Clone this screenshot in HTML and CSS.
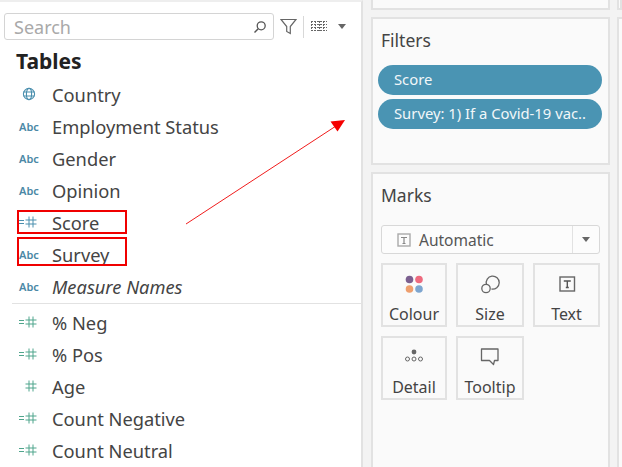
FILE: index.html
```html
<!DOCTYPE html>
<html lang="en">
<head>
  <meta charset="UTF-8" />
  <meta name="viewport" content="width=device-width, initial-scale=1.0" />
  <title>Data pane</title>
  <link rel="stylesheet" href="styles.css">
</head>
<body>
  <svg width="0" height="0" class="defs">
    <symbol id="hash" viewBox="0 0 12 12">
      <path d="M4 0.5V11.5M8 0.5V11.5M0.5 4H11.5M0.5 8H11.5" fill="none" stroke="currentColor" stroke-width="1"/>
    </symbol>
    <symbol id="bin" viewBox="0 0 5 12">
      <path d="M0 4.500H5M0 7.500H5" fill="none" stroke="currentColor" stroke-width="1"/>
    </symbol>
  </svg>

  <div class="app">
    <div class="data-pane">
      <div class="toolbar">
        <div class="search">
          <span class="search-text">Search</span>
          <svg class="search-icon" width="14" height="14" viewBox="0 0 14 14"><circle cx="8.2" cy="5.8" r="4" fill="none" stroke="#555" stroke-width="1.3"/><path d="M5.2 8.8L1.5 12.5" stroke="#555" stroke-width="1.5"/></svg>
        </div>
        <svg class="filter-icon" width="17" height="17" viewBox="0 0 17 17"><path d="M1 1.5H16L10.3 8.5V15.5L6.7 13.5V8.5Z" fill="none" stroke="#666" stroke-width="1.2"/></svg>
        <span class="tool-sep"></span>
        <svg class="grid-icon" width="16" height="12" viewBox="0 0 16 12"><path d="M0 .5H16M0 3.5H16M0 6.5H16M0 9.5H16M.5 0V10M4.5 0V10M8.5 0V10M12.5 0V10" stroke="#666" stroke-width="1" stroke-dasharray="2 1" fill="none"/></svg>
        <span class="caret"></span>
      </div>

      <h2 class="tables-title">Tables</h2>

      <ul class="field-list">
        <li class="field">
          <span class="field-icon">
            <svg class="globe" width="14" height="14" viewBox="0 0 14 14"><g fill="none" stroke="currentColor" stroke-width="1.1"><circle cx="7" cy="7" r="5.6"/><ellipse cx="7" cy="7" rx="2.6" ry="5.6"/><path d="M1.4 5H12.6M1.4 9H12.6"/></g></svg>
          </span>Country
        </li>
        <li class="field"><span class="field-icon abc">Abc</span>Employment Status</li>
        <li class="field"><span class="field-icon abc">Abc</span>Gender</li>
        <li class="field"><span class="field-icon abc">Abc</span>Opinion</li>
        <li class="field">
          <span class="field-icon blue"><svg class="bin" width="5" height="12"><use href="#bin"/></svg><svg width="12" height="12"><use href="#hash"/></svg></span>Score
        </li>
        <li class="field"><span class="field-icon abc">Abc</span>Survey</li>
        <li class="field italic"><span class="field-icon abc">Abc</span>Measure Names</li>
      </ul>

      <ul class="field-list measures">
        <li class="field">
          <span class="field-icon green"><svg class="bin" width="5" height="12"><use href="#bin"/></svg><svg width="12" height="12"><use href="#hash"/></svg></span>% Neg
        </li>
        <li class="field">
          <span class="field-icon green"><svg class="bin" width="5" height="12"><use href="#bin"/></svg><svg width="12" height="12"><use href="#hash"/></svg></span>% Pos
        </li>
        <li class="field">
          <span class="field-icon green"><svg class="bin blank" width="5" height="12"></svg><svg width="12" height="12"><use href="#hash"/></svg></span>Age
        </li>
        <li class="field">
          <span class="field-icon green"><svg class="bin" width="5" height="12"><use href="#bin"/></svg><svg width="12" height="12"><use href="#hash"/></svg></span>Count Negative
        </li>
        <li class="field">
          <span class="field-icon green"><svg class="bin" width="5" height="12"><use href="#bin"/></svg><svg width="12" height="12"><use href="#hash"/></svg></span>Count Neutral
        </li>
      </ul>
    </div>

    <div class="shelves">
      <div class="card card-top"></div>

      <div class="card card-filters">
        <h3 class="card-title">Filters</h3>
        <div class="pill">Score</div>
        <div class="pill">Survey: 1) If a Covid-19 vac..</div>
      </div>

      <div class="card card-marks">
        <h3 class="card-title">Marks</h3>
        <div class="mark-select">
          <span class="mark-value">
            <svg width="14" height="14" viewBox="0 0 14 14"><rect x="1" y="1" width="12" height="12" fill="none" stroke="#aaa" stroke-width="1.4"/><path d="M4 4.5H10M7 4.5V10.5M5.5 10.5H8.5" fill="none" stroke="#888" stroke-width="1.2"/></svg>
            Automatic
          </span>
          <span class="mark-arrow"><span class="caret"></span></span>
        </div>
        <div class="mark-grid">
          <div class="mark-btn">
            <svg width="20" height="20" viewBox="0 0 20 20"><circle cx="5.5" cy="5.5" r="3.8" fill="#7b5f8f"/><circle cx="15" cy="5.5" r="3.8" fill="#ee6a7e"/><circle cx="5.5" cy="15" r="3.8" fill="#ee9f6e"/><circle cx="15" cy="15" r="3.8" fill="#7da5cf"/></svg>
            <span>Colour</span>
          </div>
          <div class="mark-btn">
            <svg width="20" height="20" viewBox="0 0 20 20"><g fill="none" stroke="#666" stroke-width="1.3"><path d="M6.5 10.5A6.5 6.5 0 1 1 11.5 15"/><circle cx="6" cy="14.5" r="4.2"/></g></svg>
            <span>Size</span>
          </div>
          <div class="mark-btn">
            <svg width="20" height="20" viewBox="0 0 20 20"><rect x="3" y="3" width="14.5" height="14" fill="none" stroke="#666" stroke-width="1.4"/><path d="M6.8 7H13.8M10.3 7V13.5M8.8 13.5H11.8" fill="none" stroke="#555" stroke-width="1.4"/></svg>
            <span>Text</span>
          </div>
          <div class="mark-btn">
            <svg width="20" height="20" viewBox="0 0 20 20"><circle cx="10" cy="5" r="2.4" fill="#666"/><g fill="none" stroke="#666" stroke-width="1"><circle cx="3.5" cy="12" r="2"/><circle cx="10" cy="12" r="2"/><circle cx="16.5" cy="12" r="2"/></g></svg>
            <span>Detail</span>
          </div>
          <div class="mark-btn">
            <svg width="20" height="20" viewBox="0 0 20 20"><path d="M1.5 2H18V13.5H14.5L13.5 17.5L9.5 13.5H1.5Z" fill="none" stroke="#666" stroke-width="1.3" stroke-linejoin="round"/></svg>
            <span>Tooltip</span>
          </div>
        </div>
      </div>
    </div>

    <div class="far-col">
      <div class="card card-top"></div>
      <div class="card card-far"></div>
    </div>
  </div>

  <!-- annotations drawn over the screenshot -->
  <div class="red-box box-score"></div>
  <div class="red-box box-survey"></div>
  <svg class="arrow" width="622" height="467" viewBox="0 0 622 467">
    <path d="M186 224L336 126" stroke="#f01c1c" stroke-width="1" fill="none"/>
    <path d="M345 120L330.500 121.500L337.500 131.500Z" fill="#f50000"/>
  </svg>
</body>
</html>
```

FILE: styles.css
```css
* {
  box-sizing: border-box;
}
html, body {
  height: 100%;
}
body {
  margin: 0;
  position: relative;
  overflow: hidden;
  background: #f3f3f3;
  color: #333;
  font-family: "Noto Sans", Arial, sans-serif;
}
.defs {
  position: absolute;
}
.app {
  display: flex;
  height: 467px;
}

/* data pane */
.data-pane {
  width: 363px;
  flex: none;
  background: #fff;
  border-top: 2px solid #eee;
  border-right: 2px solid #e2e2e2;
}
.toolbar {
  display: flex;
  align-items: center;
  height: 27px;
  margin: 11px 0 0 4px;
}
.search {
  display: flex;
  align-items: center;
  justify-content: space-between;
  width: 270px;
  height: 27px;
  padding: 0 6px 0 9px;
  border: 1px solid #d4d4d4;
  border-radius: 3px;
}
.search-text {
  font-size: 18px;
  color: #a9a9a9;
}
.filter-icon {
  margin-left: 6px;
}
.tool-sep {
  width: 1px;
  height: 22px;
  margin: 0 7px 0 6px;
  background: #d8d8d8;
}
.caret {
  display: inline-block;
  width: 0;
  height: 0;
  border-left: 4px solid transparent;
  border-right: 4px solid transparent;
  border-top: 5px solid #666;
}
.toolbar .caret {
  margin-left: 11px;
}
.tables-title {
  margin: 6px 0 2px 16px;
  height: 30px;
  line-height: 30px;
  font-size: 21px;
  font-weight: 700;
  color: #222;
}
.field-list {
  list-style: none;
  margin: 0;
  padding: 0;
}
.measures {
  margin: 1px 0 0 12px;
  padding-top: 2px;
  border-top: 1px solid #e2e2e2;
}
.measures .field {
  margin-left: -12px;
}
.field {
  display: flex;
  align-items: center;
  height: 32px;
  font-size: 18.300px;
  color: #444;
}
.italic {
  font-style: italic;
}
.field-icon {
  display: flex;
  align-items: center;
  width: 52px;
  padding-left: 19px;
  flex: none;
}
.abc {
  font-size: 11px;
  font-weight: 600;
  font-style: normal;
  color: #4b88a6;
}
.globe {
  margin-left: 3px;
}
.blue, .globe {
  color: #4b8fae;
}
.green {
  color: #4fa58c;
}
.bin {
  margin-right: 1px;
}

/* middle column */
.shelves {
  width: 254px;
  flex: none;
  padding: 0 7px 0 8px;
}
.card {
  border: 2px solid #e2e2e2;
  background: #fafafa;
}
.card-top {
  height: 10px;
  border-top: 0;
}
.card-filters {
  height: 148px;
  margin-top: 7px;
  padding: 9px 6px 0 5px;
}
.card-marks {
  height: 310px;
  margin-top: 7px;
  padding: 9px 8px 0;
}
.card-title {
  margin: 0;
  height: 24px;
  line-height: 24px;
  font-size: 17.500px;
  font-weight: 400;
  color: #444;
}
.card-filters .card-title {
  margin-left: 3px;
}
.pill {
  height: 30px;
  line-height: 29px;
  margin-bottom: 4px;
  padding-left: 16px;
  border-radius: 15px;
  background: #4a94b3;
  color: #f2f7f9;
  font-size: 14.800px;
  white-space: nowrap;
}
.card-filters .card-title + .pill {
  margin-top: 13px;
}
.mark-select {
  display: flex;
  height: 29px;
  margin-top: 18px;
  border: 1px solid #d8d8d8;
  border-radius: 3px;
  background: #fcfcfc;
}
.mark-value {
  flex: 1;
  display: flex;
  align-items: center;
  gap: 8px;
  padding-left: 15px;
  font-size: 15.500px;
  color: #555;
}
.mark-arrow {
  display: flex;
  align-items: center;
  justify-content: center;
  width: 27px;
  border-left: 1px solid #e2e2e2;
}
.mark-grid {
  display: grid;
  grid-template-columns: 66px 68px 67px;
  grid-auto-rows: 64px;
  gap: 9px;
  margin-top: 9px;
}
.mark-btn {
  display: flex;
  flex-direction: column;
  align-items: center;
  padding-top: 9px;
  border: 2px solid #e2e2e2;
  font-size: 16px;
  color: #444;
}
.mark-btn span {
  margin-top: 9px;
  line-height: 22px;
}

/* right edge */
.far-col {
  flex: 1;
}
.card-far {
  height: 460px;
  margin-top: 7px;
  border-right: 0;
}

/* red annotations */
.red-box {
  position: absolute;
  left: 17px;
  width: 110px;
  border: 2px solid #f00000;
}
.box-score {
  top: 210px;
  height: 24px;
}
.box-survey {
  top: 237px;
  height: 29px;
}
.arrow {
  position: absolute;
  left: 0;
  top: 0;
  pointer-events: none;
}
```
